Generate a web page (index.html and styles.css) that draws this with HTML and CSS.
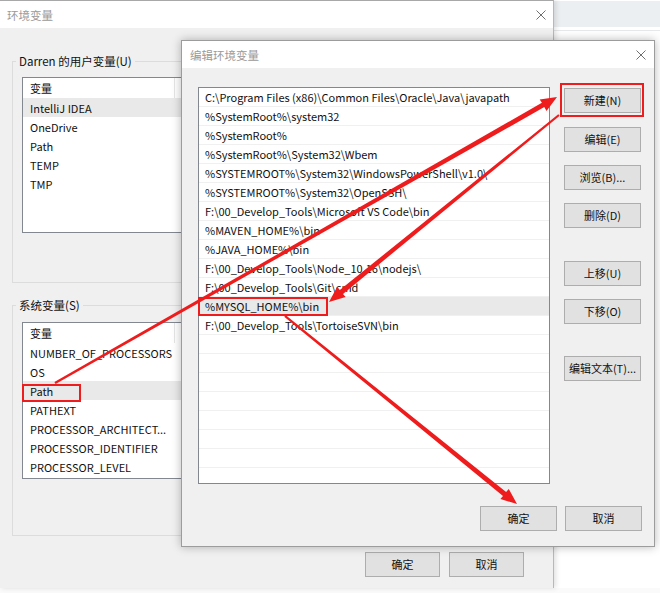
FILE: index.html
```html
<!DOCTYPE html>
<html lang="zh-CN">
<head>
<meta charset="utf-8">
<title>环境变量</title>
<link rel="stylesheet" href="styles.css">
</head>
<body>
<div class="desk">
  <div class="top">
    <section class="win main">
      <header class="titlebar">
        <span class="title">环境变量</span>
        <svg class="close" width="10" height="10" viewBox="0 0 10 10"><path d="M0.5 0.5L9.5 9.5M9.5 0.5L0.5 9.5" stroke="#6f6f6f" stroke-width="1"/></svg>
      </header>
      <div class="main-body">
        <fieldset class="group user">
          <legend>Darren 的用户变量(U)</legend>
          <div class="list ulist">
            <div class="lhead"><span class="c1">变量</span></div>
            <div class="row sel"><span class="c1">IntelliJ IDEA</span></div>
            <div class="row"><span class="c1">OneDrive</span></div>
            <div class="row"><span class="c1">Path</span></div>
            <div class="row"><span class="c1">TEMP</span></div>
            <div class="row"><span class="c1">TMP</span></div>
          </div>
          <div class="gspace"></div>
        </fieldset>
        <fieldset class="group sys">
          <legend>系统变量(S)</legend>
          <div class="list slist">
            <div class="lhead"><span class="c1">变量</span></div>
            <div class="row"><span class="c1">NUMBER_OF_PROCESSORS</span></div>
            <div class="row"><span class="c1">OS</span></div>
            <div class="row sel"><span class="c1">Path</span></div>
            <div class="row"><span class="c1">PATHEXT</span></div>
            <div class="row"><span class="c1">PROCESSOR_ARCHITECT...</span></div>
            <div class="row"><span class="c1">PROCESSOR_IDENTIFIER</span></div>
            <div class="row"><span class="c1">PROCESSOR_LEVEL</span></div>
          </div>
          <div class="gspace sysspace"></div>
        </fieldset>
        <div class="main-buttons"><button class="btn mbtn">确定</button><button class="btn mbtn">取消</button></div>
      </div>
    </section>
    <div class="behind"><div class="band"></div><div class="hair"></div></div>
  </div>
  <div class="bottom-strip"></div>

  <section class="win dialog">
    <header class="titlebar dtitle">
      <span class="title">编辑环境变量</span>
      <svg class="close" width="10" height="10" viewBox="0 0 10 10"><path d="M0.5 0.5L9.5 9.5M9.5 0.5L0.5 9.5" stroke="#6f6f6f" stroke-width="1"/></svg>
    </header>
    <div class="dlg-body">
      <div class="dlg-main">
        <div class="plist">
          <div class="prow">C:\Program Files (x86)\Common Files\Oracle\Java\javapath</div>
          <div class="prow">%SystemRoot%\system32</div>
          <div class="prow">%SystemRoot%</div>
          <div class="prow">%SystemRoot%\System32\Wbem</div>
          <div class="prow">%SYSTEMROOT%\System32\WindowsPowerShell\v1.0\</div>
          <div class="prow">%SYSTEMROOT%\System32\OpenSSH\</div>
          <div class="prow">F:\00_Develop_Tools\Microsoft VS Code\bin</div>
          <div class="prow">%MAVEN_HOME%\bin</div>
          <div class="prow">%JAVA_HOME%\bin</div>
          <div class="prow">F:\00_Develop_Tools\Node_10.16\nodejs\</div>
          <div class="prow">F:\00_Develop_Tools\Git\cmd</div>
          <div class="prow sel">%MYSQL_HOME%\bin</div>
          <div class="prow">F:\00_Develop_Tools\TortoiseSVN\bin</div>
          <div class="prow"></div>
          <div class="prow"></div>
          <div class="prow"></div>
          <div class="prow"></div>
          <div class="prow"></div>
          <div class="prow"></div>
          <div class="prow"></div>
          <div class="prow"></div>
        </div>
        <div class="side">
          <button class="btn sbtn b-new">新建(N)</button>
          <button class="btn sbtn b-edit">编辑(E)</button>
          <button class="btn sbtn b-browse">浏览(B)...</button>
          <button class="btn sbtn b-del">删除(D)</button>
          <button class="btn sbtn b-up">上移(U)</button>
          <button class="btn sbtn b-down">下移(O)</button>
          <button class="btn sbtn b-text">编辑文本(T)...</button>
        </div>
      </div>
      <div class="dlg-foot"><button class="btn dbtn">确定</button><button class="btn dbtn">取消</button></div>
    </div>
  </section>

  <svg class="marks" width="660" height="593" viewBox="0 0 660 593">
    <g fill="none" stroke="#ee1c1c" stroke-width="2">
      <rect x="561" y="84" width="82" height="32"/>
      <rect x="199" y="298" width="128" height="17"/>
      <rect x="23" y="385" width="57" height="16"/>
    </g>
    <g fill="#ee1c1c">
      <polygon points="55.6,384 544.3,107.1 546.5,111 557,97 539.7,99.5 541.9,102.8 54.4,382"/>
      <polygon points="558.3,114.2 339.8,290 337.2,286.8 329,302 345.6,297 343,293.9 559.7,115.8"/>
      <polygon points="284.2,316.8 503,495.9 500.4,499 517,504 508.8,489 506.1,492 285.8,315.2"/>
    </g>
  </svg>
</div>
</body>
</html>
```

FILE: styles.css
```css
* { box-sizing: border-box; }
html, body { margin: 0; padding: 0; }
body {
  width: 660px;
  height: 593px;
  overflow: hidden;
  background: #fff;
  font-family: "Noto Sans CJK SC", "Noto Sans", sans-serif;
  font-size: 11px;
  color: #111;
}
.desk { position: relative; width: 660px; height: 593px; overflow: hidden; }
.top { display: flex; height: 588px; }

/* main window */
.main {
  width: 554px;
  height: 588px;
  flex: none;
  background: #f0f0f0;
  border-top: 1px solid #a8a8a8;
  border-right: 1px solid #b8b8b8;
  box-shadow: 2px 0 5px rgba(0,0,0,0.12);
  position: relative;
  z-index: 1;
  display: flex;
  flex-direction: column;
}
.titlebar {
  height: 27px;
  flex: none;
  background: #fff;
  display: flex;
  align-items: center;
  justify-content: space-between;
  padding: 0 7px 0 7px;
  color: #9a9a9a;
  font-size: 11.5px;
}
.title { line-height: 16px; }
.close { display: block; }
.main-body { padding: 25px 11px 0 12px; }

.group {
  margin: 0;
  padding: 8px 0 0 0;
  border: 1px solid #dcdcdc;
  width: 530px;
}
.group legend {
  margin-left: 3px;
  padding: 0 3px;
  line-height: 16px;
  font-size: 11.5px;
  color: #111;
}
.sys { margin-top: 14px; padding-top: 9px; }

.list {
  margin-left: 9px;
  width: 508px;
  background: #fff;
  border: 1px solid #828790;
  overflow: hidden;
}
.ulist { height: 156px; }
.slist { height: 157px; }
.lhead { height: 20px; display: flex; align-items: center; }
.lhead .c1 { border-right: 1px solid #e5e5e5; height: 20px; line-height: 20px; }
.row { height: 19px; display: flex; align-items: center; }
.row.sel { background: #e9e9e9; }
.c1 { width: 152px; padding-left: 7px; white-space: nowrap; overflow: hidden; flex: none; }

.gspace { height: 49px; }
.sysspace { height: 56px; }

.btn {
  font: inherit;
  color: #111;
  background: #e1e1e1;
  border: 1px solid #adadad;
  height: 25px;
  padding: 0;
  display: block;
  text-align: center;
  line-height: 23px;
  border-radius: 0;
}
.main-buttons { display: flex; justify-content: flex-end; gap: 9px; margin: 16px 18px 0 0; }
.mbtn { width: 75px; }

.behind { flex: 1; background: #fff; }
.behind .band { height: 26px; margin-top: 1px; background: #eceff1; }
.behind .hair { height: 1px; margin-top: 3px; background: #e6e8ea; }
.bottom-strip { height: 5px; background: #fafafa; }

/* dialog */
.dialog {
  position: absolute;
  left: 181px;
  top: 40px;
  width: 474px;
  height: 507px;
  background: #f0f0f0;
  border: 1px solid #9c9c9c;
  box-shadow: 0 0 9px rgba(0,0,0,0.28);
  z-index: 2;
  display: flex;
  flex-direction: column;
}
.dtitle { padding: 0 8px 0 8px; }
.dlg-body { padding: 19px 12px 0 16px; }
.dlg-main { display: flex; }
.plist {
  width: 352px;
  height: 397px;
  background: #fff;
  border: 1px solid #828790;
  overflow: hidden;
  flex: none;
}
.prow {
  height: 19px;
  line-height: 18px;
  padding-left: 6px;
  border-bottom: 1px solid #f0f0f0;
  white-space: nowrap;
  overflow: hidden;
}
.prow.sel { background: #e9e9e9; }
.side { margin-left: 14px; display: flex; flex-direction: column; }
.sbtn { width: 77px; }
.b-new { margin-top: 1px; }
.b-edit { margin-top: 14px; }
.b-browse { margin-top: 13px; }
.b-del { margin-top: 13px; }
.b-up { margin-top: 33px; }
.b-down { margin-top: 13px; }
.b-text { margin-top: 32px; }
.dlg-foot { display: flex; justify-content: flex-end; gap: 8px; margin-top: 22px; }
.dbtn { width: 77px; }

.marks { position: absolute; left: 0; top: 0; z-index: 5; pointer-events: none; }
```
